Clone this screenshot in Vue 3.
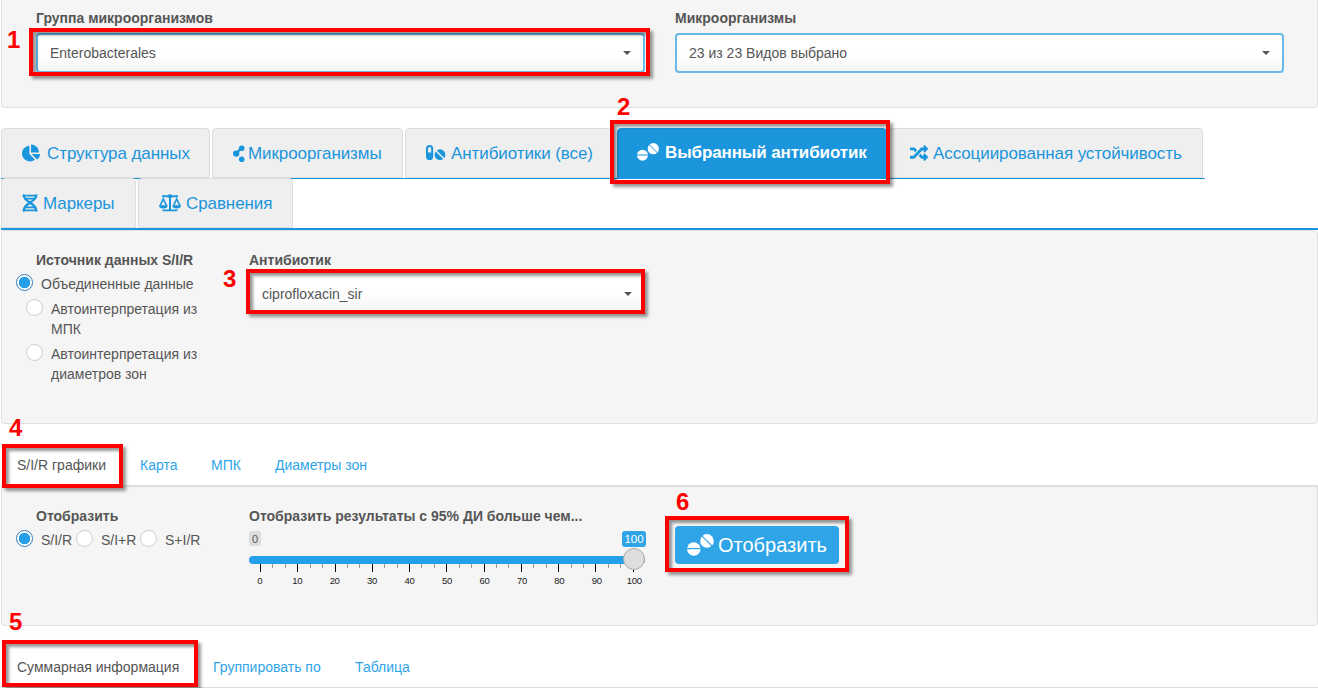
<script setup>
const tabs = [
  { id: 'pie', label: 'Структура данных', w: 209 },
  { id: 'share', label: 'Микроорганизмы', w: 191 },
  { id: 'capsule', label: 'Антибиотики (все)', w: 210 },
  { id: 'tablets', label: 'Выбранный антибиотик', w: 270, active: true },
  { id: 'random', label: 'Ассоциированная устойчивость', w: 314 },
]
const tabsSecond = [
  { id: 'dna', label: 'Маркеры' },
  { id: 'scale', label: 'Сравнения' },
]
const sources = ['Объединенные данные', 'Автоинтерпретация из МПК', 'Автоинтерпретация из диаметров зон']
const modes = ['S/I/R', 'S/I+R', 'S+I/R']
const steps = [0, 10, 20, 30, 40, 50, 60, 70, 80, 90, 100]
</script>

<template>
  <div class="page">
    <svg class="defs" width="0" height="0">
      <symbol id="pie" viewBox="0 0 544 512"><path d="M527.79 288H290.5l158.03 158.03c6.04 6.04 15.98 6.53 22.19.68 38.7-36.46 65.32-85.61 73.13-140.86 1.34-9.46-6.51-17.85-16.06-17.85zm-15.83-64.8C503.72 103.74 408.26 8.28 288.8.04 279.68-.59 272 7.1 272 16.24V240h223.77c9.14 0 16.82-7.68 16.19-16.8zM224 288V50.71c0-9.55-8.39-17.4-17.84-16.06C86.99 51.49-4.1 155.6.14 280.37 4.5 408.51 114.83 513.59 243.03 511.98c50.4-.63 96.97-16.87 135.26-44.03 7.9-5.6 8.42-17.23 1.57-24.08L224 288z" /></symbol>
      <symbol id="share" viewBox="0 0 12 17"><circle cx="3.2" cy="8.6" r="3.2" /><circle cx="8.7" cy="3.2" r="2.8" /><circle cx="8.7" cy="14.2" r="2.8" /><path d="M3 8.500 8.500 3.200" stroke="currentColor" stroke-width="2.400" /></symbol>
      <symbol id="capsule" viewBox="0 0 20 17"><path fill-rule="evenodd" d="M3.6 .5A3.6 3.6 0 0 1 7.2 4.1v7.8a3.6 3.6 0 0 1-7.2 0V4.100A3.6 3.6 0 0 1 3.6 .5zm0 2A1.6 1.6 0 0 0 2 4.100v4h3.200V4.100A1.600 1.600 0 0 0 3.600 2.500z" /><circle cx="14" cy="10.200" r="5.400" /><path class="cut" d="M9.500 5.700 18.500 14.700" stroke-width="1.500" /></symbol>
      <symbol id="tablets" viewBox="0 0 22 18"><circle cx="5.500" cy="12.200" r="5.500" /><path class="cut" d="M0 12H11" stroke-width="1" /><circle cx="16.300" cy="5.700" r="5.600" /><path class="cut" d="M12.100 1.500 20.500 9.900" stroke-width="1" /></symbol>
      <symbol id="random" viewBox="0 0 512 512"><path d="M504.971 359.029c9.373 9.373 9.373 24.569 0 33.941l-80 79.984c-15.01 15.01-40.971 4.49-40.971-16.971V416h-58.785a12.004 12.004 0 0 1-8.773-3.812l-70.556-75.596 53.333-57.143L352 336h32v-39.981c0-21.438 25.943-31.998 40.971-16.971l80 79.981zM12 176h84l52.781 56.551 53.333-57.143-70.556-75.596A11.999 11.999 0 0 0 122.785 96H12c-6.627 0-12 5.373-12 12v56c0 6.627 5.373 12 12 12zm372 0v39.984c0 21.46 25.961 31.98 40.971 16.971l80-79.984c9.373-9.373 9.373-24.569 0-33.941l-80-79.981C409.943 24.021 384 34.582 384 56.019V96h-58.785a12.004 12.004 0 0 0-8.773 3.812L96 336H12c-6.627 0-12 5.373-12 12v56c0 6.627 5.373 12 12 12h110.785c3.326 0 6.503-1.381 8.773-3.812L352 176h32z" /></symbol>
      <symbol id="dna" viewBox="0 0 16 18"><g fill="none" stroke="currentColor"><path d="M1.500 .5C1.500 9 14.500 8 14.500 17.500M14.500 .5C14.500 9 1.500 8 1.500 17.500" stroke-width="2.200" /><path d="M1 1.600h14M2.500 4.600h11M2.500 13.300h11M1 16.300h14" stroke-width="1.700" /></g></symbol>
      <symbol id="scale" viewBox="0 0 22 18"><path d="M3 1.300h6a2.300 2.300 0 0 1 4 0h6v1.900h-6l-1 1V15.400H18.500v1.900h-15v-1.900h6.500V4.200L9 3.200H3z" /><path d="M0 11.300h8.600a4.300 3.300 0 0 1-8.600 0zM13.400 11.300H22a4.300 3.300 0 0 1-8.600 0z" /><path d="M1 11.800 4.300 4.900 7.600 11.800M14.400 11.800 17.700 4.900 21 11.800" fill="none" stroke="currentColor" stroke-width="1.600" /></symbol>
    </svg>

    <section class="panel filters">
      <div class="field">
        <div class="label">Группа микроорганизмов</div>
        <div class="select focus"><span>Enterobacterales</span><i class="caret"></i></div>
      </div>
      <div class="field">
        <div class="label">Микроорганизмы</div>
        <div class="select focus"><span>23 из 23 Видов выбрано</span><i class="caret"></i></div>
      </div>
    </section>

    <nav class="main-tabs">
      <div class="row first">
        <a v-for="t in tabs" :key="t.id" :class="['tab', t.id, { active: t.active }]" :style="{ width: t.w + 'px' }">
          <svg class="ico"><use :href="'#' + t.id" /></svg><span>{{ t.label }}</span>
        </a>
      </div>
      <div class="row second">
        <a v-for="t in tabsSecond" :key="t.id" :class="['tab', t.id]">
          <svg class="ico"><use :href="'#' + t.id" /></svg><span>{{ t.label }}</span>
        </a>
      </div>
    </nav>

    <section class="panel source">
      <div class="col-a">
        <div class="label">Источник данных S/I/R</div>
        <div v-for="(s, i) in sources" :key="s" :class="['option', { on: i === 0 }]"><i class="radio"></i><span>{{ s }}</span></div>
      </div>
      <div class="col-b">
        <div class="label">Антибиотик</div>
        <div class="select"><span>ciprofloxacin_sir</span><i class="caret"></i></div>
      </div>
    </section>

    <nav class="sub-tabs">
      <a class="current t1">S/I/R графики</a><a class="t2">Карта</a><a class="t3">МПК</a><a class="t4">Диаметры зон</a>
    </nav>

    <section class="panel display">
      <div class="col-a">
        <div class="label">Отобразить</div>
        <div class="modes">
          <div v-for="(m, i) in modes" :key="m" :class="['mode', { on: i === 0 }]"><i class="radio"></i><span>{{ m }}</span></div>
        </div>
      </div>
      <div class="col-b">
        <div class="label">Отобразить результаты с 95% ДИ больше чем...</div>
        <div class="slider">
          <div class="ends"><span class="min">0</span><span class="max">100</span></div>
          <div class="bar"><i class="handle"></i></div>
          <div class="ticks"><i v-for="n in 31" :key="n" :class="{ major: n % 3 === 1 }"></i></div>
          <div class="nums"><span v-for="n in steps" :key="n">{{ n }}</span></div>
        </div>
      </div>
      <button class="show"><svg class="ico"><use href="#tablets" /></svg><span>Отобразить</span></button>
    </section>

    <nav class="sub-tabs last">
      <a class="current u1">Суммарная информация</a><a class="u2">Группировать по</a><a class="u3">Таблица</a>
    </nav>

    <div class="mark m1"><b>1</b></div>
    <div class="mark m2"><b>2</b></div>
    <div class="mark m3"><b>3</b></div>
    <div class="mark m4"><b>4</b></div>
    <div class="mark m5"><b>5</b></div>
    <div class="mark m6"><b>6</b></div>
  </div>
</template>

<style>
body { margin: 0; background: #fff; overflow: hidden; }
</style>

<style scoped>
.page { position: relative; width: 1318px; height: 688px; overflow: hidden; box-sizing: border-box; padding-left: 1px; font: 14px/20px "Liberation Sans", Arial, sans-serif; color: #555; }
.page * { box-sizing: border-box; }
.defs { position: absolute; }
.cut { stroke: var(--cut); fill: none; }
.panel { background: #f5f5f5; border: 1px solid #e0e0e0; border-radius: 4px; display: flex; width: 1317px; }
.filters { height: 108px; border-top: 0; border-radius: 0 0 4px 4px; padding: 8px 0 0 34px; gap: 30px; }
.field { width: 609px; }
.label { font-weight: bold; line-height: 20px; white-space: nowrap; }
.select { margin-top: 5px; height: 40px; border: 2px solid transparent; border-radius: 4px; background: linear-gradient(#fff 45%, #f3f3f3) border-box; display: flex; align-items: center; justify-content: space-between; padding: 0 12px; }
.select.focus { border-color: #66b9e8; background: linear-gradient(#fff 50%, #f5f5f5) padding-box; }
.caret { border: 4px solid transparent; border-top-color: #555; border-bottom: 0; }

.main-tabs { margin-top: 20px; height: 102px; border-bottom: 2px solid #1b95dc; }
.row { display: flex; gap: 2px; }
.first { width: 1204px; height: 51px; border-bottom: 1px solid #1b95dc; }
.tab { --cut: #efefef; height: 50px; background: #efefef; border: 1px solid #dcdcdc; border-radius: 4px 4px 0 0; color: #1b95dc; font-size: 17px; letter-spacing: -.09px; display: flex; align-items: center; padding-left: 20px; white-space: nowrap; }
.tab span { padding-top: 2px; }
.second { margin-top: -1px; position: relative; }
.second .dna { width: 135px; }
.second .scale { width: 155px; }
.ico { width: 18px; height: 18px; fill: currentColor; flex: none; }
.pie .ico { margin-right: 7px; }
.share .ico { width: 12px; height: 17px; margin-right: 3px; }
.capsule .ico { width: 20px; margin-right: 5px; }
.tab.active { --cut: #1b95dc; background: #1b95dc; border-color: #1b95dc; color: #fff; font-weight: bold; padding: 0 0 3px 19px; height: 51px; letter-spacing: -.12px; }
.tab.tablets .ico { width: 22px; margin-right: 6px; }
.random .ico { margin-right: 5px; }
.dna .ico { width: 16px; margin-right: 5px; }
.scale .ico { width: 22px; margin-right: 5px; }

.source { height: 194px; padding: 19px 0 0 14px; }
.col-a { width: 233px; }
.col-a .label { padding-left: 20px; }
.option { display: flex; width: 195px; padding-left: 10px; margin-bottom: 5px; line-height: 20px; }
.option.on { padding-left: 0; margin-top: 4px; }
.radio { width: 17px; height: 17px; border: 1px solid #ccc; border-radius: 50%; background: #fff; margin-right: 8px; flex: none; }
.on .radio { border-color: #337ab7; background: radial-gradient(circle, #249fe8 0 5.5px, #fff 6px); }
.source .col-b { width: 397px; }
.source .select { margin-top: 4px; padding: 0 11px; margin-right: 1px; }

.sub-tabs { height: 61px; display: flex; align-items: flex-end; color: #2fa4e7; line-height: 20px; }
.sub-tabs a { height: 30px; white-space: nowrap; }
.sub-tabs .current { color: #555; }
.t1 { width: 123px; padding-left: 16px; }
.t2 { width: 71px; padding-left: 16px; }
.t3 { width: 64px; padding-left: 16px; }
.t4 { padding-left: 16px; }
.display { height: 141px; padding: 21px 0 0 14px; box-shadow: inset 0 2px 1px #dedede; border-top: 0; border-radius: 0 0 4px 4px; }
.modes { display: flex; margin-top: 4px; }
.mode { display: flex; width: 60px; }
.mode + .mode { width: 64px; }
.display .col-b { width: 426px; }
.slider { width: 396px; padding-top: 4px; }
.ends { display: flex; justify-content: space-between; height: 26px; margin-right: -1px; }
.ends span { border-radius: 3px; padding: 1px 3px; height: 16px; }
.ends .min { background: #ddd; font-size: 11px; line-height: 14px; height: 15px; margin-top: 1px; }
.ends .max { background: #2fa4e7; color: #fff; font-size: 11.500px; line-height: 16px; width: 24px; margin-top: 1px; padding: 0; text-align: center; }
.bar { position: relative; height: 8px; background: #249fe8; border-radius: 4px; }
.handle { position: absolute; right: 0; top: -8px; width: 22px; height: 22px; border-radius: 50%; background: #dedede; border: 1px solid #aaa; }
.ticks { display: flex; justify-content: space-between; margin: 0 11px; height: 8px; }
.ticks i { width: 1px; height: 4px; background: #999; }
.ticks .major { height: 8px; background: #000; }
.nums { display: flex; justify-content: space-between; margin: 3px -8px 0; font-size: 9.500px; letter-spacing: -.3px; line-height: 12px; color: #222; }
.nums span { width: 38px; text-align: center; }
.show { --cut: #2fa4e7; width: 164px; height: 38px; margin-top: 20px; background: #2fa4e7; border: 0; border-radius: 4px; color: #fff; font: 20px "Liberation Sans", Arial, sans-serif; display: flex; align-items: center; padding: 0 0 0 12px; }
.show .ico { width: 27px; height: 22px; margin-right: 4px; }
.last { height: 62px; border-bottom: 1px solid #ddd; }
.u1 { width: 196px; padding-left: 16px; }
.u2 { width: 142px; padding-left: 16px; }
.u3 { padding-left: 16px; }

.mark { position: absolute; border: 4px solid #f00; box-shadow: 3px 3px 3px rgba(0,0,0,.4), inset 3px 3px 3px rgba(0,0,0,.4); }
.mark b { position: absolute; color: #f00; font-size: 24px; line-height: 24px; }
.m1 { left: 29px; top: 28px; width: 621px; height: 48px; }
.m1 b { left: -26px; top: -4px; }
.m2 { left: 610px; top: 120px; width: 280px; height: 64px; }
.m2 b { left: 3px; top: -29px; }
.m3 { left: 246px; top: 269px; width: 399px; height: 45px; }
.m3 b { left: -27px; top: -6px; }
.m4 { left: 2px; top: 444px; width: 121px; height: 44px; }
.m4 b { left: 3px; top: -32px; }
.m5 { left: 2px; top: 640px; width: 196px; height: 47px; }
.m5 b { left: 3px; top: -34px; }
.m6 { left: 665px; top: 516px; width: 184px; height: 56px; }
.m6 b { left: 7px; top: -30px; }
</style>
